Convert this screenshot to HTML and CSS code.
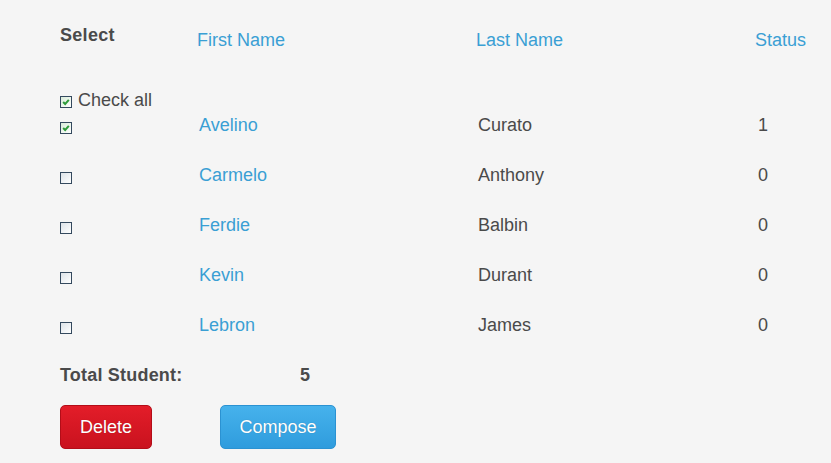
FILE: index.html
```html
<!DOCTYPE html>
<html lang="en">
<head>
  <meta charset="UTF-8">
  <title>Students</title>
  <link rel="stylesheet" href="styles.css">
</head>
<body>
  <div class="page">
    <div class="row head-row">
      <div class="select-label">Select</div>
      <div class="col-head">First Name</div>
      <div class="col-head">Last Name</div>
      <div class="col-head">Status</div>
    </div>

    <div class="row check-all-row">
      <label class="check-all"><span class="box checked"><svg viewBox="0 0 12 12"><path d="M2.6 6 L5 8.4 L9.4 3.4" /></svg></span>Check all</label>
    </div>

    <div class="row data-row">
      <div><span class="box checked"><svg viewBox="0 0 12 12"><path d="M2.6 6 L5 8.4 L9.4 3.4" /></svg></span></div>
      <div class="first">Avelino</div>
      <div class="last">Curato</div>
      <div class="status">1</div>
    </div>
    <div class="row data-row">
      <div><span class="box"></span></div>
      <div class="first">Carmelo</div>
      <div class="last">Anthony</div>
      <div class="status">0</div>
    </div>
    <div class="row data-row">
      <div><span class="box"></span></div>
      <div class="first">Ferdie</div>
      <div class="last">Balbin</div>
      <div class="status">0</div>
    </div>
    <div class="row data-row">
      <div><span class="box"></span></div>
      <div class="first">Kevin</div>
      <div class="last">Durant</div>
      <div class="status">0</div>
    </div>
    <div class="row data-row">
      <div><span class="box"></span></div>
      <div class="first">Lebron</div>
      <div class="last">James</div>
      <div class="status">0</div>
    </div>

    <div class="total-row">
      <span class="total-label">Total Student:</span>
      <span class="total-count">5</span>
    </div>

    <div class="actions">
      <button class="btn btn-delete">Delete</button>
      <button class="btn btn-compose">Compose</button>
    </div>
  </div>
</body>
</html>
```

FILE: styles.css
```css
* {
  box-sizing: border-box;
}

body {
  margin: 0;
  background-color: #f5f5f5;
  font-family: 'Liberation Sans', Arial, sans-serif;
  font-size: 18px;
  color: #4a4a4a;
}

.page {
  padding: 18px 0 0 60px;
}

.row {
  display: grid;
  grid-template-columns: 137px 279px 279px 1fr;
  align-items: center;
}

.head-row {
  height: 44px;
}

.select-label {
  font-weight: bold;
  letter-spacing: 0.3px;
  margin-bottom: 10px;
  color: #4a4a4a;
}

.col-head {
  color: #3a9fd4;
}

.check-all-row {
  margin-top: 26px;
  height: 24px;
}

.check-all {
  display: flex;
  align-items: center;
  white-space: nowrap;
}

.check-all .box {
  margin: 4px 6px 0 0;
}

.data-row {
  height: 26px;
  margin-top: 24px;
}

.check-all-row + .data-row {
  margin-top: 0;
}

.data-row .box {
  margin-top: 6px;
}

.first {
  color: #3a9fd4;
  padding-left: 2px;
}

.last {
  padding-left: 2px;
}

.status {
  padding-left: 3px;
}

.box {
  display: block;
  width: 12px;
  height: 12px;
  border: 1px solid #34495e;
  background: linear-gradient(135deg, #dde3e8, #ffffff);
}

.box.checked {
  background: linear-gradient(135deg, #d9ecd9, #ffffff);
}

.box svg {
  display: block;
  width: 10px;
  height: 10px;
}

.box svg path {
  fill: none;
  stroke: #2e9b3a;
  stroke-width: 2.4;
}

.total-row {
  display: flex;
  align-items: center;
  height: 26px;
  margin-top: 24px;
  font-weight: bold;
  letter-spacing: 0.2px;
}

.total-label {
  width: 240px;
}

.actions {
  display: flex;
  gap: 68px;
  margin-top: 17px;
}

.btn {
  height: 44px;
  border-radius: 5px;
  font-family: 'Liberation Sans', Arial, sans-serif;
  font-size: 18px;
  color: #fff;
  text-shadow: 0 0 1px rgba(0, 0, 0, 0.25);
  cursor: pointer;
}

.btn-delete {
  width: 92px;
  background: linear-gradient(#e31d29, #c9121e);
  border: 1px solid #b30d18;
}

.btn-compose {
  width: 116px;
  background: linear-gradient(#46b2ec, #2f9cdd);
  border: 1px solid #2b92d2;
}
```
